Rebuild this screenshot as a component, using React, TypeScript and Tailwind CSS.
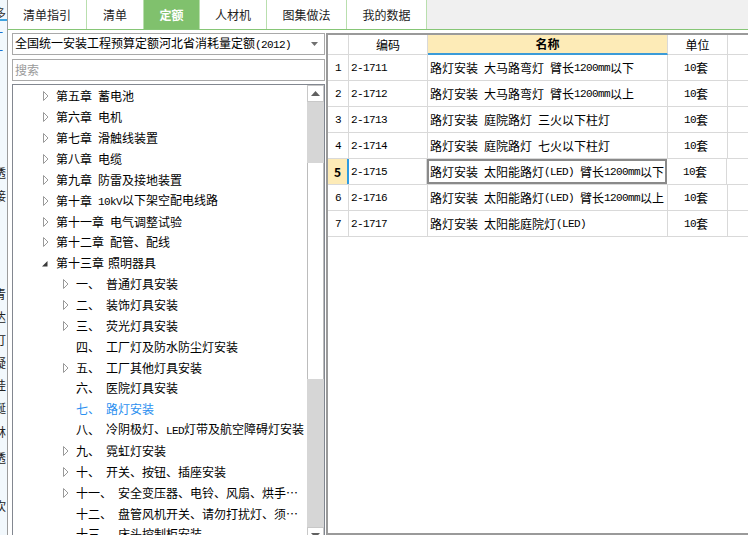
import type { ReactNode } from "react";

const tabs = [
  { label: "清单指引", w: "w-[79px]", active: false },
  { label: "清单", w: "w-[57px]", active: false },
  { label: "定额", w: "w-[56px]", active: true },
  { label: "人材机", w: "w-[67px]", active: false },
  { label: "图集做法", w: "w-[80px]", active: false },
  { label: "我的数据", w: "w-[80px]", active: false },
];

const chapters = [
  ["第五章", "蓄电池"],
  ["第六章", "电机"],
  ["第七章", "滑触线装置"],
  ["第八章", "电缆"],
  ["第九章", "防雷及接地装置"],
  ["第十章", "10kV以下架空配电线路"],
  ["第十一章", "电气调整试验"],
  ["第十二章", "配管、配线"],
];

const subs = [
  { n: "一、", t: "普通灯具安装", arrow: true },
  { n: "二、", t: "装饰灯具安装", arrow: true },
  { n: "三、", t: "荧光灯具安装", arrow: true },
  { n: "四、", t: "工厂灯及防水防尘灯安装", arrow: false },
  { n: "五、", t: "工厂其他灯具安装", arrow: true },
  { n: "六、", t: "医院灯具安装", arrow: false },
  { n: "七、", t: "路灯安装", arrow: false, sel: true },
  { n: "八、", t: "冷阴极灯、LED灯带及航空障碍灯安装", arrow: false },
  { n: "九、", t: "霓虹灯安装", arrow: true },
  { n: "十、", t: "开关、按钮、插座安装", arrow: true },
  { n: "十一、", t: "安全变压器、电铃、风扇、烘手器安装", arrow: true },
  { n: "十二、", t: "盘管风机开关、请勿打扰灯、须刨插座安装", arrow: false },
  { n: "十三、", t: "床头控制柜安装", arrow: false },
];

const rows = [
  ["2-1711", "路灯安装 大马路弯灯 臂长1200mm以下"],
  ["2-1712", "路灯安装 大马路弯灯 臂长1200mm以上"],
  ["2-1713", "路灯安装 庭院路灯 三火以下柱灯"],
  ["2-1714", "路灯安装 庭院路灯 七火以下柱灯"],
  ["2-1715", "路灯安装 太阳能路灯(LED) 臂长1200mm以下"],
  ["2-1716", "路灯安装 太阳能路灯(LED) 臂长1200mm以上"],
  ["2-1717", "路灯安装 太阳能庭院灯(LED)"],
];

// half-width runs get a ~6px-per-char mono face, like the old bitmap font
function Mixed({ text }: { text: string }) {
  const parts = text.split(/([\x20-\x7e]+)/).filter((p) => p !== "");
  return (
    <>
      {parts.map((p, i) =>
        /[\x20-\x7e]/.test(p) ? (
          <span key={i} className="font-['Liberation_Mono',monospace] text-[11px] tracking-[-0.6px] whitespace-pre">
            {p}
          </span>
        ) : (
          <span key={i}>{p}</span>
        ),
      )}
    </>
  );
}

function Closed() {
  return (
    <svg width="6" height="10" viewBox="0 0 6 10" className="shrink-0">
      <polygon points="0.5,0.5 5,5 0.5,9.5" fill="#fff" stroke="#9a9a9a" strokeWidth="1" />
    </svg>
  );
}

function Open() {
  return (
    <svg width="6" height="6" viewBox="0 0 6 6" className="mt-[2px] shrink-0">
      <polygon points="5.5,0 5.5,5.5 0,5.5" fill="#3a3a3a" />
    </svg>
  );
}

function Arrow({ children }: { children?: ReactNode }) {
  return <span className="flex w-[13px] shrink-0 items-center">{children}</span>;
}

function LeftStrip() {
  return (
    <div className="flex w-[8px] shrink-0 flex-col overflow-hidden border-r border-[#9c9c9c] bg-[#f2f8fc] text-[12px] leading-[12px]">
      <div className="mt-[7px] -ml-[6px] h-[12px] text-[#333]">多</div>
      <div className="h-[2px] w-full bg-[#3fa3e0]" />
      <div className="mt-[6px] -ml-[9px] h-[10px] text-[#1a6fd0]">一</div>
      <div className="mt-[8px] -ml-[9px] h-[10px] text-[#1a6fd0]">一</div>
      <div className="mt-[112px] -ml-[6px] h-[20px] text-[#222]">透</div>
      <div className="mt-[3px] -ml-[6px] h-[20px] text-[#222]">接</div>
      <div className="mt-[78px] -ml-[6px] h-[23px] text-[#222]">青</div>
      <div className="-ml-[6px] h-[23px] text-[#222]">达</div>
      <div className="-ml-[6px] h-[23px] text-[#222]">灯</div>
      <div className="-ml-[6px] h-[22px] text-[#222]">疑</div>
      <div className="-ml-[6px] h-[23px] text-[#222]">挂</div>
      <div className="-ml-[6px] h-[24px] text-[#222]">诞</div>
      <div className="-ml-[6px] h-[26px] text-[#222]">林</div>
      <div className="-ml-[6px] h-[48px] text-[#222]">透</div>
      <div className="-ml-[6px] h-[20px] text-[#222]">坎</div>
    </div>
  );
}

function Tree() {
  return (
    <div className="mt-[3px] flex h-[462px] border border-[#828790] bg-white">
      <div className="flex min-w-0 flex-1 flex-col pt-[1px]">
        {chapters.map(([a, b]) => (
          <div key={a} className="flex h-[21px] items-center pl-[30px] whitespace-nowrap">
            <Arrow>
              <Closed />
            </Arrow>
            <span>{a}</span>
            <span className="ml-[6px]">
              <Mixed text={b} />
            </span>
          </div>
        ))}
        <div className="flex h-[21px] items-center pl-[29px] whitespace-nowrap">
          <Arrow>
            <Open />
          </Arrow>
          <span className="ml-[1px]">第十三章</span>
          <span className="ml-[4px]">照明器具</span>
        </div>
        {subs.map((s) => (
          <div
            key={s.n}
            className={`flex h-[21px] items-center pl-[50px] whitespace-nowrap ${s.sel ? "text-[#2b8ff0]" : "text-black"}`}
          >
            <Arrow>{s.arrow ? <Closed /> : null}</Arrow>
            <span className="shrink-0">{s.n}</span>
            <span className="ml-[6px] min-w-0 overflow-hidden text-ellipsis">
              <Mixed text={s.t} />
            </span>
          </div>
        ))}
      </div>
      <div className="flex w-[17px] shrink-0 flex-col bg-[#d6d6d6]">
        <div className="flex h-[17px] items-center justify-center border border-[#c8c8c8] bg-white">
          <svg width="9" height="5" viewBox="0 0 9 5">
            <polygon points="4.5,0 9,5 0,5" fill="#606060" />
          </svg>
        </div>
        <div className="h-[61px]" />
        <div className="h-[216px] border-x border-[#bcbcbc] bg-white" />
        <div className="h-[148px]" />
        <div className="flex h-[17px] items-center justify-center border border-[#c8c8c8] bg-white">
          <svg width="9" height="5" viewBox="0 0 9 5">
            <polygon points="0,0 9,0 4.5,5" fill="#606060" />
          </svg>
        </div>
      </div>
    </div>
  );
}

function Grid() {
  return (
    <div className="mt-[3px] flex h-[502px] flex-1 flex-col border-y-2 border-l-2 border-[#9a9a9a] bg-white">
      <div className="flex h-[20px] shrink-0">
        <div className="w-[21px] border-r border-b border-[#d9d9d9]" />
        <div className="flex w-[79px] items-center justify-center border-r border-b border-[#d9d9d9]">编码</div>
        <div className="flex w-[240px] items-center justify-center border-r border-b-2 border-r-[#d9d9d9] border-b-[#3b9bd8] bg-[#fdebb7] font-bold">
          名称
        </div>
        <div className="flex w-[60px] items-center justify-center border-r border-b border-[#d9d9d9]">单位</div>
        <div className="flex-1 border-b border-[#d9d9d9]" />
      </div>
      {rows.map(([code, name], i) => {
        const sel = i === 4;
        return (
          <div key={code} className="flex h-[26px] shrink-0 border-b border-[#d9d9d9]">
            <div
              className={`flex w-[21px] items-center justify-center border-r ${sel ? "border-r-2 border-[#2e9be0] bg-[#fdebb7] text-[12px] font-bold" : "border-[#d9d9d9]"}`}
            >
              {sel ? i + 1 : <Mixed text={String(i + 1)} />}
            </div>
            <div className={`flex items-center border-r border-[#d9d9d9] pl-[2px] ${sel ? "w-[78px]" : "w-[79px]"}`}>
              <Mixed text={code} />
            </div>
            <div
              className={`flex w-[240px] items-center overflow-hidden whitespace-nowrap ${sel ? "border-2 border-[#8a8a8a] pl-[1px]" : "border-r border-[#d9d9d9] pl-[2px]"}`}
            >
              <Mixed text={name} />
            </div>
            <div className="flex w-[60px] items-center justify-center border-r border-[#d9d9d9] pr-[3px]">
              <Mixed text="10套" />
            </div>
            <div className="flex-1" />
          </div>
        );
      })}
      <div className="flex-1" />
    </div>
  );
}

export default function App() {
  return (
    <div className="flex h-[535px] w-[748px] overflow-hidden bg-white font-['Noto_Sans_CJK_SC',sans-serif] text-[12px] leading-[14px] text-black">
      <LeftStrip />
      <div className="flex min-w-0 flex-1 flex-col">
        <div className="flex h-[30px] shrink-0 border-b border-[#86c676] bg-[#f0f0f0]">
          {tabs.map((t) => (
            <div
              key={t.label}
              className={`flex ${t.w} items-center justify-center border-r border-[#b9dfae] text-[12px] ${t.active ? "bg-[#80c16d] font-bold text-white" : "bg-white text-[#222]"}`}
            >
              {t.label}
            </div>
          ))}
        </div>
        <div className="flex flex-1">
          <div className="flex w-[318px] shrink-0 flex-col pt-[3px] pl-[4px] pr-[1px]">
            <div className="flex h-[22px] items-center justify-between border border-[#a9a9a9] pl-[2px] pr-[6px] whitespace-nowrap">
              <span>
                <Mixed text="全国统一安装工程预算定额河北省消耗量定额(2012)" />
              </span>
              <svg width="7" height="4" viewBox="0 0 7 4">
                <polygon points="0,0 7,0 3.5,4" fill="#707070" />
              </svg>
            </div>
            <div className="mt-[4px] flex h-[22px] items-center border border-[#a9a9a9] pl-[2px] text-[#9a9a9a]">搜索</div>
            <Tree />
          </div>
          <Grid />
        </div>
      </div>
    </div>
  );
}
